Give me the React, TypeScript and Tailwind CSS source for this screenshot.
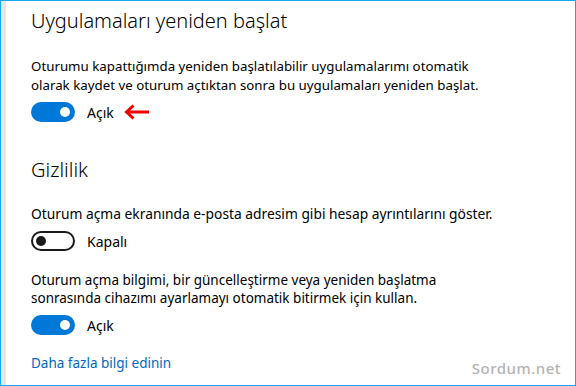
import React from 'react';

const Toggle: React.FC<{ on: boolean }> = ({ on }) =>
  on ? (
    <div className="w-[44px] h-[20px] rounded-full bg-[#0078d7] flex items-center justify-end pr-[5px]">
      <div className="w-[10px] h-[10px] rounded-full bg-white" />
    </div>
  ) : (
    <div className="w-[44px] h-[20px] rounded-full border-2 border-[#1a1a1a] bg-white flex items-center pl-[3px]">
      <div className="w-[10px] h-[10px] rounded-full bg-[#1a1a1a]" />
    </div>
  );

const Row: React.FC<{ on: boolean; label: string; children?: React.ReactNode }> = ({ on, label, children }) => (
  <div className="flex items-center h-[20px]">
    <Toggle on={on} />
    <span className="ml-[12px] text-[14px] text-black">{label}</span>
    {children}
  </div>
);

export default function App() {
  return (
    <div
      className="w-[576px] h-[386px] border border-[#14aaf0] bg-white flex overflow-hidden"
      style={{ fontFamily: '"Noto Sans", "Open Sans", sans-serif' }}
    >
      <div className="w-[5px] bg-[#e6e6e6] shrink-0" />
      <div className="flex-1 pl-[25px] pt-[6px] relative">
        {/* Uygulamaları yeniden başlat */}
        <h1 className="text-[20px] font-light text-black leading-[28px]">Uygulamaları yeniden başlat</h1>
        <p className="mt-[22px] text-[13.3px] leading-[19px] text-black whitespace-nowrap">
          Oturumu kapattığımda yeniden başlatılabilir uygulamalarımı otomatik
          <br />
          olarak kaydet ve oturum açtıktan sonra bu uygulamaları yeniden başlat.
        </p>
        <div className="mt-[7px]">
          <Row on label="Açık">
            <svg width="26" height="16" viewBox="0 0 26 16" className="ml-[10px]">
              <path d="M3 8 H25" stroke="#f00000" strokeWidth="3" />
              <path d="M9.5 1.5 L2.5 8 L9.5 14.5" stroke="#f00000" strokeWidth="3" fill="none" />
            </svg>
          </Row>
        </div>

        {/* Gizlilik */}
        <h2 className="mt-[34px] text-[20px] font-light text-black leading-[28px]">Gizlilik</h2>
        <p className="mt-[20px] text-[13.8px] leading-[19px] text-black whitespace-nowrap">
          Oturum açma ekranında e-posta adresim gibi hesap ayrıntılarını göster.
        </p>
        <div className="mt-[8px]">
          <Row on={false} label="Kapalı" />
        </div>
        <p className="mt-[20px] text-[13.5px] leading-[18px] text-black whitespace-nowrap">
          Oturum açma bilgimi, bir güncelleştirme veya yeniden başlatma
          <br />
          sonrasında cihazımı ayarlamayı otomatik bitirmek için kullan.
        </p>
        <div className="mt-[8px]">
          <Row on label="Açık" />
        </div>
        <a className="block mt-[19px] text-[13.5px] leading-[19px] text-[#0067c0]">Daha fazla bilgi edinin</a>
        <span className="absolute right-[14px] bottom-[6px] text-[15px] font-medium tracking-[0.5px] text-[#b4b4b4]">
          Sordum.net
        </span>
      </div>
    </div>
  );
}
